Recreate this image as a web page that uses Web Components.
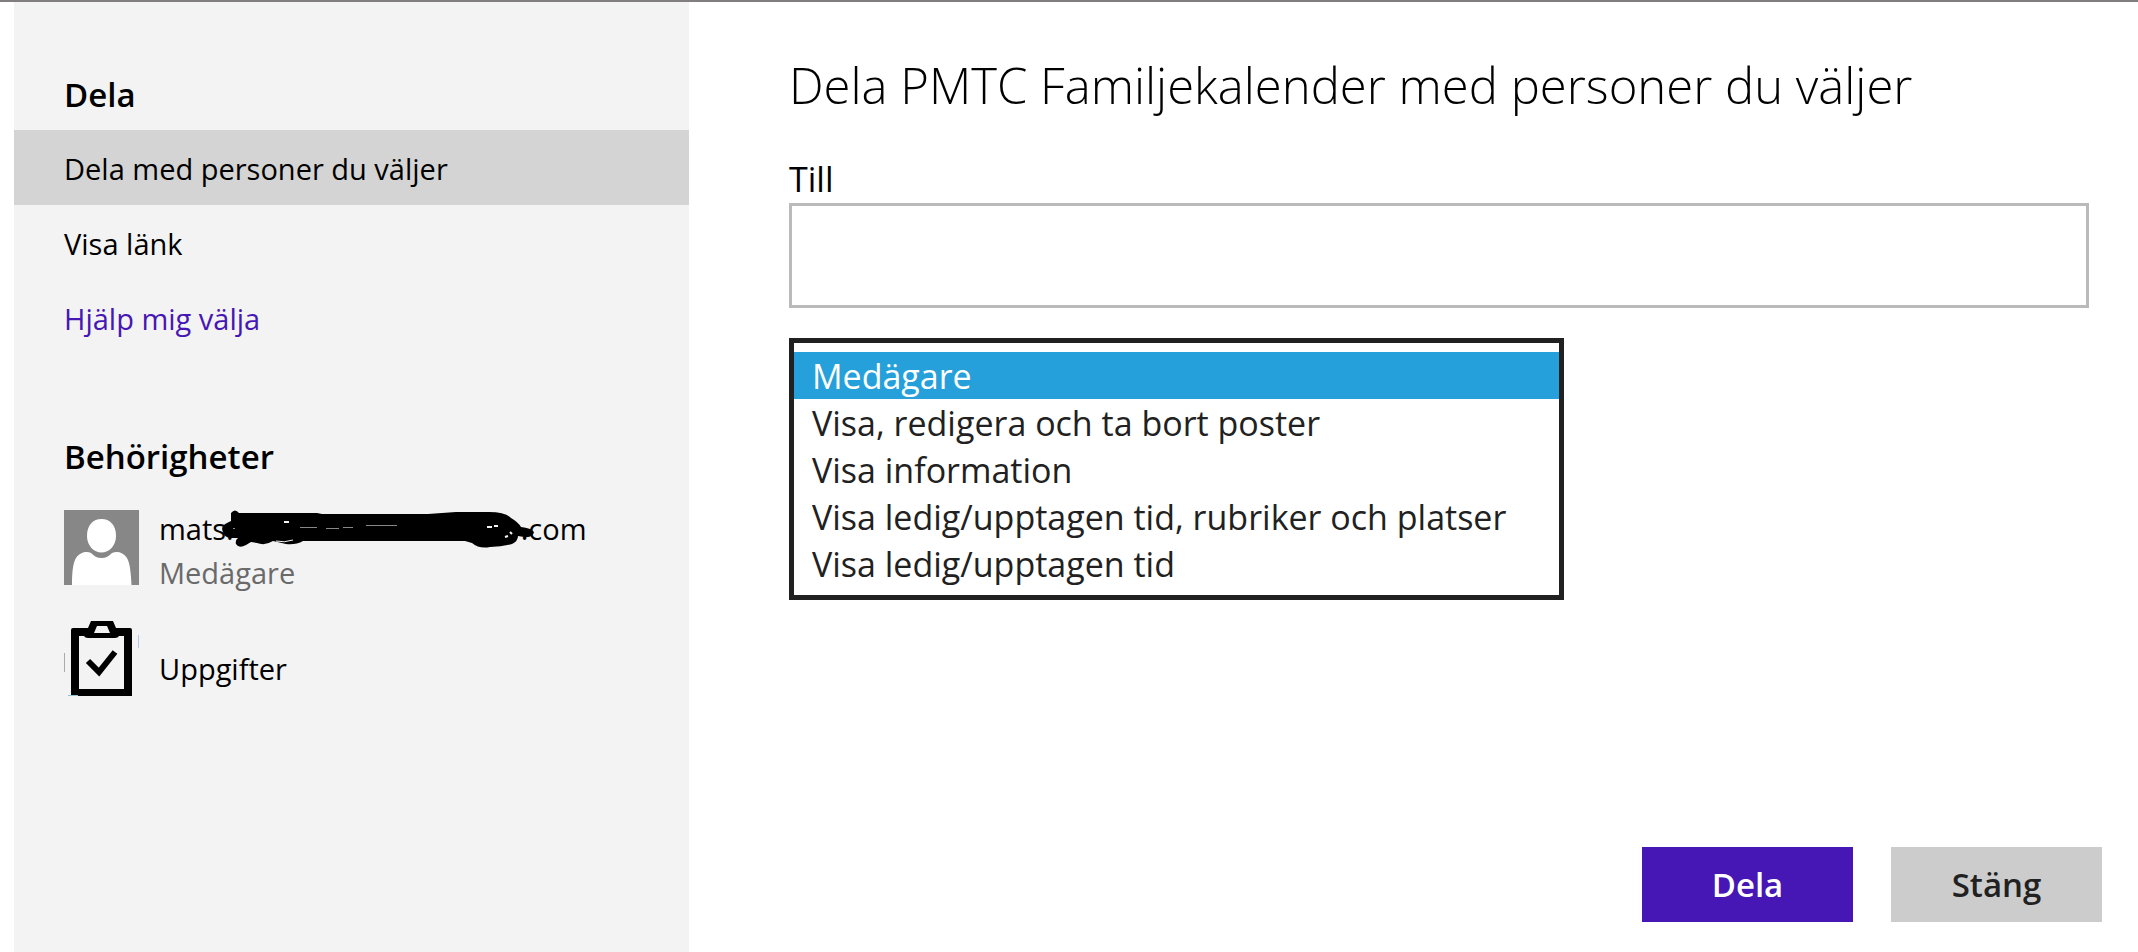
<!DOCTYPE html>
<html lang="sv">
<head>
<meta charset="UTF-8">
<meta name="viewport" content="width=device-width, initial-scale=1">
<title>Dela kalender</title>
<style>
    body {
        margin: 0;
        background: white;
        color: black;
        font-family: "Open Sans", "Noto Sans", sans-serif;
        font-size: 29px;
    }
</style>
</head>
<body>

<dela-dialog>
    <dela-meny slot="meny">
        <meny-rubrik>Dela</meny-rubrik>
        <meny-val href="#personer" aktiv>Dela med personer du väljer</meny-val>
        <meny-val href="#lank">Visa länk</meny-val>
        <meny-val href="#hjalp" hjalp>Hjälp mig välja</meny-val>
        <meny-rubrik avsnitt>Behörigheter</meny-rubrik>
        <person-rad>
            <ikon-person slot="ikon"></ikon-person>
            <dold-adress start="mats." slut=".com"></dold-adress>
            <span slot="roll">Medägare</span>
        </person-rad>
        <person-rad enkel>
            <ikon-uppgifter slot="ikon"></ikon-uppgifter>
            Uppgifter
        </person-rad>
    </dela-meny>
    <dela-formular titel="Dela PMTC Familjekalender med personer du väljer"></dela-formular>
</dela-dialog>

<script>
// Creates the shadow root and fills it
function rita(element, html) {
    element.attachShadow({ mode: "open" }).innerHTML = html;
}

// FRAME: menu to the left, form to the right
class DelaDialog extends HTMLElement {
    constructor() {
        super();
        rita(this, `
            <style>
                :host {
                    display: grid;
                    grid-template-columns: minmax(0, 675px) minmax(0, 1fr);
                    box-sizing: border-box;
                    min-height: 100vh;
                    padding-left: 14px;
                    border-top: 2px solid #807e7e;
                }
            </style>
            <slot name="meny"></slot>
            <slot></slot>
        `);
    }
}

class DelaMeny extends HTMLElement {
    constructor() {
        super();
        rita(this, `
            <style>
                :host {
                    display: block;
                    padding-top: 69px;
                    background: #f3f3f3;
                }
            </style>
            <slot></slot>
        `);
    }
}

class MenyRubrik extends HTMLElement {
    constructor() {
        super();
        rita(this, `
            <style>
                :host {
                    display: block;
                    padding: 0 50px 11px;
                }
                :host([avsnitt]) {
                    padding-top: 78px;
                    padding-bottom: 29px;
                }
                h2 {
                    margin: 0;
                    font-size: 33px;
                    font-weight: 600;
                    line-height: 48px;
                }
            </style>
            <h2><slot></slot></h2>
        `);
    }
}

class MenyVal extends HTMLElement {
    constructor() {
        super();
        rita(this, `
            <style>
                :host {
                    display: block;
                }
                a {
                    display: block;
                    padding: 3px 50px 0;
                    color: black;
                    line-height: 72px;
                    text-decoration: none;
                }
                :host([aktiv]) a {
                    background: #d4d4d4;
                }
                :host([hjalp]) a {
                    color: #4617b4;
                }
            </style>
            <a href="${this.getAttribute("href")}"><slot></slot></a>
        `);
    }
}

class PersonRad extends HTMLElement {
    constructor() {
        super();
        rita(this, `
            <style>
                :host {
                    display: flex;
                    align-items: start;
                    gap: 20px;
                    padding: 0 50px 29px;
                }
                .text {
                    display: grid;
                    gap: 6px;
                    line-height: 38px;
                }
                /* a row without a role has its name further down */
                :host([enkel]) .text {
                    padding-top: 29px;
                }
                .roll {
                    color: #6a6a6a;
                }
            </style>
            <slot name="ikon"></slot>
            <div class="text">
                <div><slot></slot></div>
                <div class="roll"><slot name="roll"></slot></div>
            </div>
        `);
    }
}

class IkonPerson extends HTMLElement {
    constructor() {
        super();
        rita(this, `
            <style>
                :host, svg {
                    display: block;
                }
            </style>
            <svg width="75" height="75" viewBox="0 0 75 75" aria-hidden="true">
                <rect width="75" height="75" fill="#878787"/>
                <path fill="#fff" d="M37.500 9C46 9 52 15 52 26C52 36 45 42.500 37.500 42.500C30 42.500 23 36 23 26C23 15 29 9 37.500 9Z"/>
                <path fill="#fff" d="M8 75C8 62 9 53 12 48C16 42 23 41 27 43C30 46 33 48 37.500 48C42 48 45 46 48 43C53 41 59 42 63 48C66 53 67 64 67.500 75Z"/>
            </svg>
        `);
    }
}

class IkonUppgifter extends HTMLElement {
    constructor() {
        super();
        rita(this, `
            <style>
                :host, svg {
                    display: block;
                }
            </style>
            <svg width="75" height="75" viewBox="0 0 75 75" aria-hidden="true">
                <path d="M7 9Q7 7 9 7H24L27 0H49L52 7H66Q68 7 68 9V75H7Z"/>
                <path fill="#f3f3f3" d="M15 15H20Q21 17 24 17H51Q54 17 55 15H60V68H15Z"/>
                <path fill="#f3f3f3" d="M33 5H43L46 12H30Z"/>
                <path fill="none" stroke="#000" stroke-width="6" d="M24 40L35 51L51 31"/>
                <path stroke="#aaa" d="M.5 32V51"/>
                <path stroke="#b4c8e4" d="M74.500 14V27"/>
                <path stroke="#8fc4d2" d="M4 74.500H14"/>
            </svg>
        `);
    }
}

// ADDRESS with its middle part scribbled over
class DoldAdress extends HTMLElement {
    constructor() {
        super();
        rita(this, `
            <style>
                :host {
                    display: flex;
                    align-items: center;
                }
                svg {
                    flex: none;
                    margin: 0 -14px 0 -13px;
                }
            </style>
            <span>${this.getAttribute("start")}</span>
            <svg width="314" height="38" viewBox="0 0 314 38" aria-hidden="true">
                <path d="M10 3Q14-2 18 3L96 3L101 4H207L235 2H268Q284 2 290 8Q297 12 300 17Q310 18 313 22Q312 28 303 27L297 26Q297 31 291 34Q281 37 269 37Q258 39 251 33L244 31H82Q75 35 65 34L52 31Q44 36 36 33L30 32L25 35Q18 39 15 34Q14 30 17 28H9Q3 27 2 22Q-1 16 6 13L10 11Z"/>
                <path fill="none" stroke="#888" d="M12 18.500H14M79 17.500H96M105 18.500H118M122 17.500H132M145 15.500H176"/>
                <path fill="none" stroke="#f3f3f3" stroke-width="2" d="M63 12H68M266 17H271M273 16H277M289 22L291 24M284 27L287 26"/>
                <path fill="none" stroke="#f3f3f3" d="M55 31Q63 33 72 30"/>
            </svg>
            <span>${this.getAttribute("slut")}</span>
        `);
    }
}

// FORM: recipients, permission list and buttons
class DelaFormular extends HTMLElement {
    constructor() {
        super();
        rita(this, `
            <style>
                :host {
                    display: block;
                }
                form {
                    display: flex;
                    flex-direction: column;
                    align-items: start;
                    box-sizing: border-box;
                    height: 100%;
                    padding: 48px 36px 30px 100px;
                }
                h1 {
                    margin: 0 0 36px;
                    font-size: 49px;
                    font-weight: 300;
                    line-height: 70px;
                }
                label {
                    font-size: 34px;
                    line-height: 47px;
                }
                input {
                    box-sizing: border-box;
                    width: calc(100% - 13px);
                    height: 105px;
                    margin: 0 0 30px;
                    padding: 0 20px;
                    border: solid #bababa;
                    border-width: 3px;
                    border-radius: 0;
                    font: inherit;
                    font-size: 34px;
                    outline: none;
                }
                select {
                    box-sizing: border-box;
                    width: 775px;
                    max-width: 100%;
                    height: 262px;
                    padding: 9px 0;
                    border: 5px solid #212121;
                    border-radius: 0;
                    background: white;
                    color: #212121;
                    font: inherit;
                    font-size: 34px;
                    overflow: hidden;
                    outline: none;
                }
                option {
                    min-height: 0;
                    padding: 1px 18px 0;
                }
                option:checked {
                    background: linear-gradient(#26a0da, #26a0da);
                    color: white !important;
                }
                footer {
                    display: flex;
                    gap: 38px;
                    margin-top: auto;
                    margin-left: auto;
                }
            </style>
            <form>
                <h1>${this.getAttribute("titel")}</h1>
                <label for="till">Till</label>
                <input id="till" type="text">
                <select size="5" aria-label="Behörighet">
                    <option selected>Medägare</option>
                    <option>Visa, redigera och ta bort poster</option>
                    <option>Visa information</option>
                    <option>Visa ledig/upptagen tid, rubriker och platser</option>
                    <option>Visa ledig/upptagen tid</option>
                </select>
                <footer>
                    <dela-knapp primar>Dela</dela-knapp>
                    <dela-knapp>Stäng</dela-knapp>
                </footer>
            </form>
        `);
    }
}

class DelaKnapp extends HTMLElement {
    constructor() {
        super();
        rita(this, `
            <style>
                :host {
                    display: block;
                }
                button {
                    min-width: 211px;
                    height: 75px;
                    padding: 0 20px;
                    border: 0;
                    background: #cccccc;
                    color: #212121;
                    font: inherit;
                    font-size: 33px;
                    font-weight: 600;
                    cursor: pointer;
                }
                :host([primar]) button {
                    background: #4617b4;
                    color: white;
                }
            </style>
            <button type="button"><slot></slot></button>
        `);
    }
}

customElements.define("dela-dialog", DelaDialog);
customElements.define("dela-meny", DelaMeny);
customElements.define("meny-rubrik", MenyRubrik);
customElements.define("meny-val", MenyVal);
customElements.define("person-rad", PersonRad);
customElements.define("ikon-person", IkonPerson);
customElements.define("ikon-uppgifter", IkonUppgifter);
customElements.define("dold-adress", DoldAdress);
customElements.define("dela-knapp", DelaKnapp);
customElements.define("dela-formular", DelaFormular);
</script>
</body>
</html>
